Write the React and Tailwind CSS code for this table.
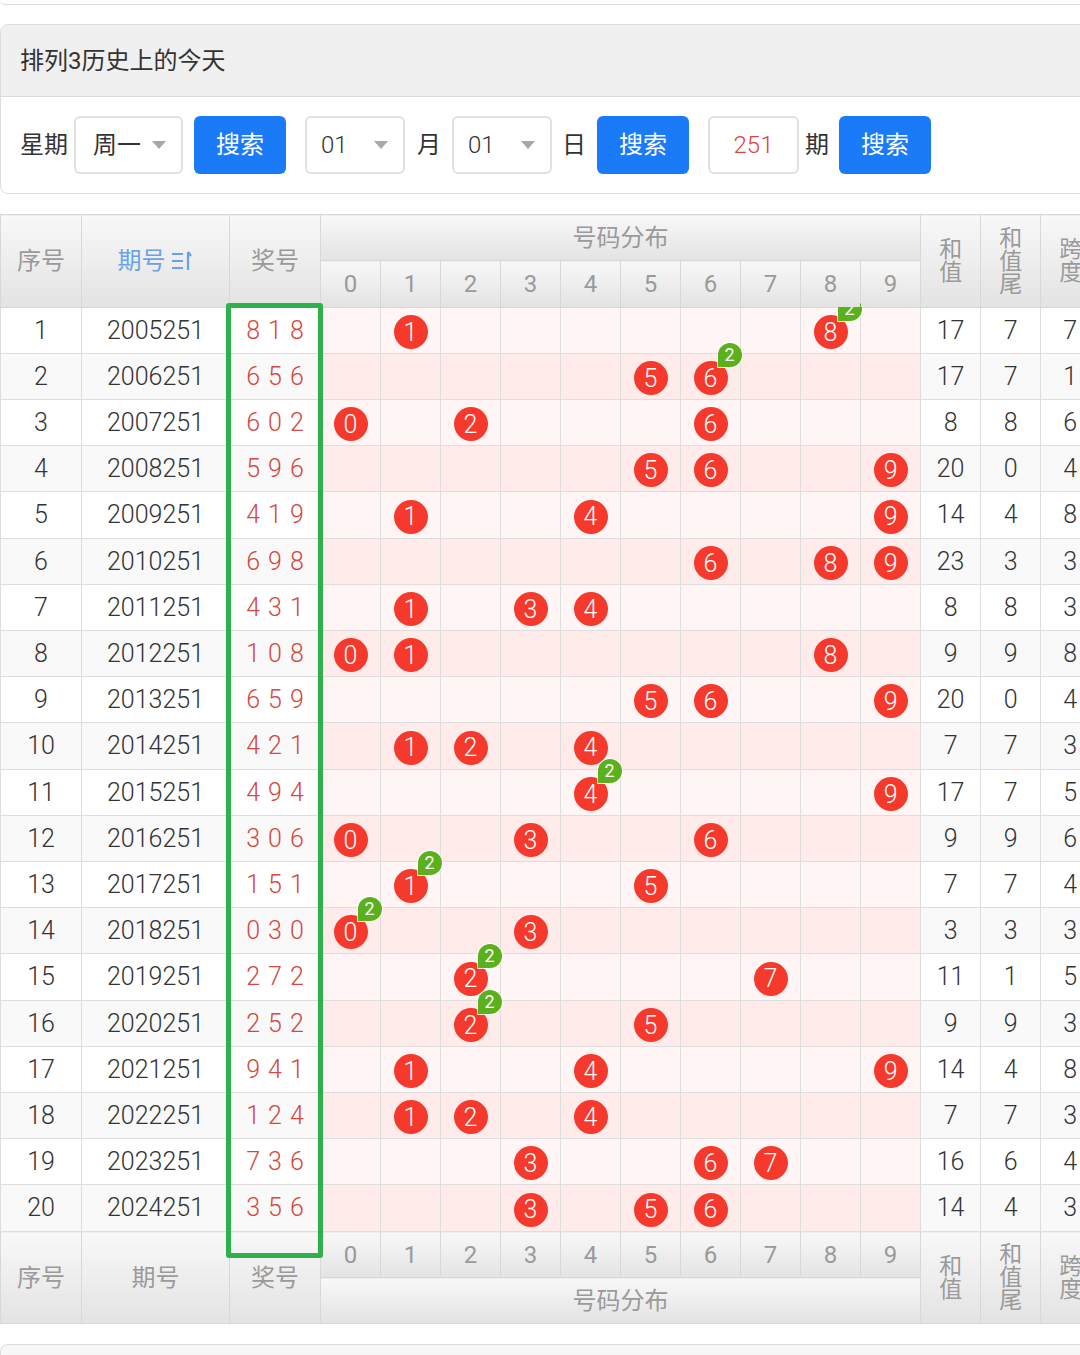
import React from "react";

const rows = [
  ["2005251", "818"],
  ["2006251", "656"],
  ["2007251", "602"],
  ["2008251", "596"],
  ["2009251", "419"],
  ["2010251", "698"],
  ["2011251", "431"],
  ["2012251", "108"],
  ["2013251", "659"],
  ["2014251", "421"],
  ["2015251", "494"],
  ["2016251", "306"],
  ["2017251", "151"],
  ["2018251", "030"],
  ["2019251", "272"],
  ["2020251", "252"],
  ["2021251", "941"],
  ["2022251", "124"],
  ["2023251", "736"],
  ["2024251", "356"],
];

const digits = [0, 1, 2, 3, 4, 5, 6, 7, 8, 9];

function Caret() {
  return (
    <svg width="16" height="10" viewBox="0 0 16 10" className="shrink-0">
      <path d="M1 1 L15 1 L8 9 Z" fill="#a8a8a8" />
    </svg>
  );
}

function SortIcon() {
  return (
    <svg width="24" height="24" viewBox="0 0 24 24" className="inline-block ml-1 -mt-1">
      <path d="M2 5 H13 M2 12 H13 M2 19 H13" stroke="#6aa2e8" strokeWidth="2.2" />
      <path d="M18 3 V21 M18 3 L21 7" stroke="#6aa2e8" strokeWidth="2.2" fill="none" />
    </svg>
  );
}

function Ball({ n, count }) {
  return (
    <span className="relative inline-flex w-[34px] h-[34px] rounded-full bg-[#f5392c] text-white text-[25px] font-light leading-none items-center justify-center align-middle">
      {n}
      {count > 1 && (
        <span className="absolute left-[24px] top-[-18px] w-[24px] h-[24px] rounded-t-[12px] rounded-br-[12px] rounded-bl-none bg-[#5bb01d] text-white text-[18px] font-normal leading-none flex items-center justify-center shadow-[0_0_0_1px_rgba(255,255,255,0.8)]">
          {count}
        </span>
      )}
    </span>
  );
}

function VText({ chars }) {
  return (
    <div className="flex flex-col items-center leading-[23px] text-[23px]">
      {chars.split("").map((c, i) => (
        <span key={i}>{c}</span>
      ))}
    </div>
  );
}

const th = "relative z-10 border border-[#d8d8d8] bg-gradient-to-b from-[#f8f8f8] to-[#e3e3e3] text-[#9a9a9a] font-normal p-0";
const td = "border border-[#dedede]";

export default function App() {
  return (
    <div className="w-[1080px] h-[1355px] overflow-hidden bg-white text-[#333] font-['Roboto','Noto_Sans_CJK_SC',sans-serif]">
      <div className="w-[1100px] h-[5px] border-b border-[#dcdcdc] rounded-b-lg" />

      <div className="mt-[19px] w-[1100px] border border-[#dcdcdc] rounded-lg overflow-hidden">
        <div className="h-[72px] bg-[#f0f0f0] border-b border-[#dcdcdc] flex items-center pl-[19px] text-[24px] text-[#333]">
          排列3历史上的今天
        </div>
        <div className="h-[96px] flex items-center pl-[19px] text-[24px]">
          <span className="mr-[6px]">星期</span>
          <div className="w-[109px] h-[58px] border-2 border-[#e0e0e0] rounded-md flex items-center justify-between pl-[17px] pr-[14px]">
            <span>周一</span>
            <Caret />
          </div>
          <button className="ml-[11px] w-[92px] h-[58px] rounded-md bg-[#1a7af8] text-white text-[24px]">搜索</button>
          <div className="ml-[19px] w-[100px] h-[58px] border-2 border-[#e0e0e0] rounded-md flex items-center justify-between pl-[14px] pr-[14px]">
            <span className="font-light">01</span>
            <Caret />
          </div>
          <span className="ml-[12px] mr-[11px]">月</span>
          <div className="w-[100px] h-[58px] border-2 border-[#e0e0e0] rounded-md flex items-center justify-between pl-[14px] pr-[14px]">
            <span className="font-light">01</span>
            <Caret />
          </div>
          <span className="ml-[10px] mr-[11px]">日</span>
          <button className="w-[92px] h-[58px] rounded-md bg-[#1a7af8] text-white text-[24px]">搜索</button>
          <div className="ml-[19px] w-[91px] h-[58px] border-2 border-[#e0e0e0] rounded-md flex items-center justify-center text-[#d9453b] font-light">
            251
          </div>
          <span className="ml-[6px] mr-[10px]">期</span>
          <button className="w-[92px] h-[58px] rounded-md bg-[#1a7af8] text-white text-[24px]">搜索</button>
        </div>
      </div>

      <div className="relative mt-[20px]">
        <table className="w-[1100px] table-fixed border-collapse text-center text-[25px] font-light">
          <colgroup>
            <col className="w-[81px]" />
            <col className="w-[148px]" />
            <col className="w-[91px]" />
            {digits.map((d) => (
              <col key={d} className="w-[60px]" />
            ))}
            <col className="w-[60px]" />
            <col className="w-[60px]" />
            <col className="w-[60px]" />
          </colgroup>
          <thead>
            <tr className="h-[46px]">
              <th rowSpan={2} className={th + " text-[24px]"}>序号</th>
              <th rowSpan={2} className={th + " text-[24px] !text-[#6aa2e8]"}>
                期号<SortIcon />
              </th>
              <th rowSpan={2} className={th + " text-[24px]"}>奖号</th>
              <th colSpan={10} className={th + " text-[24px]"}>号码分布</th>
              <th rowSpan={2} className={th}><VText chars="和值" /></th>
              <th rowSpan={2} className={th}><VText chars="和值尾" /></th>
              <th rowSpan={2} className={th}><VText chars="跨度" /></th>
            </tr>
            <tr className="h-[47px]">
              {digits.map((d) => (
                <th key={d} className={th + " text-[24px] font-light"}>{d}</th>
              ))}
            </tr>
          </thead>
          <tbody>
            {rows.map(([period, num], i) => {
              const ds = num.split("").map(Number);
              const sum = ds.reduce((a, b) => a + b, 0);
              const span = Math.max(...ds) - Math.min(...ds);
              const even = i % 2 === 1;
              const side = even ? "bg-[#f9f9f9]" : "bg-white";
              const pink = even ? "bg-[#ffebea]" : "bg-[#fff5f4]";
              return (
                <tr key={period} className={i % 5 === 4 ? "h-[47px]" : "h-[46px]"}>
                  <td className={`${td} ${side}`}>{i + 1}</td>
                  <td className={`${td} ${side}`}>{period}</td>
                  <td className={`${td} ${side} text-[#d4483e] tracking-[8px] pl-[8px]`}>{num}</td>
                  {digits.map((d) => {
                    const count = ds.filter((x) => x === d).length;
                    return (
                      <td key={d} className={`${td} ${pink} p-0`}>
                        {count > 0 && <Ball n={d} count={count} />}
                      </td>
                    );
                  })}
                  <td className={`${td} ${side}`}>{sum}</td>
                  <td className={`${td} ${side}`}>{sum % 10}</td>
                  <td className={`${td} ${side} text-left pl-[22px]`}>{span}</td>
                </tr>
              );
            })}
          </tbody>
          <tfoot>
            <tr className="h-[46px]">
              <th rowSpan={2} className={th + " text-[24px]"}>序号</th>
              <th rowSpan={2} className={th + " text-[24px]"}>期号</th>
              <th rowSpan={2} className={th + " text-[24px]"}>奖号</th>
              {digits.map((d) => (
                <th key={d} className={th + " text-[24px] font-light"}>{d}</th>
              ))}
              <th rowSpan={2} className={th}><VText chars="和值" /></th>
              <th rowSpan={2} className={th}><VText chars="和值尾" /></th>
              <th rowSpan={2} className={th}><VText chars="跨度" /></th>
            </tr>
            <tr className="h-[46px]">
              <th colSpan={10} className={th + " text-[24px]"}>号码分布</th>
            </tr>
          </tfoot>
        </table>
        <div className="absolute z-20 left-[226px] top-[89px] w-[97px] h-[955px] border-[5px] border-[#2eb14b] rounded-[3px] pointer-events-none" />
      </div>

      <div className="mt-[20px] w-[1100px] h-[40px] border border-[#dcdcdc] rounded-lg bg-[#f7f7f7]" />
    </div>
  );
}
